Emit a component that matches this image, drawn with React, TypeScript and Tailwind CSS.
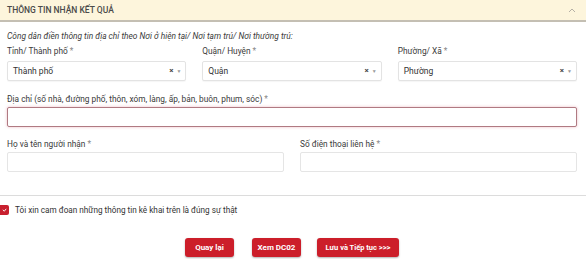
import React from "react";

const font = { fontFamily: 'Roboto, "Noto Sans", sans-serif' };

function Select({ value }: { value: string }) {
  return (
    <div className="h-[20px] border border-[#e3e3e3] rounded-[2px] bg-white flex items-center pl-[5px] pr-[4px] shadow-[0_1px_1px_rgba(0,0,0,0.04)]">
      <span className="flex-1 text-[8.5px] text-[#333]">{value}</span>
      <span className="text-[8px] font-bold text-[#444] leading-none">×</span>
      <span className="ml-[3px] text-[5px] text-[#999] leading-none">▼</span>
    </div>
  );
}

function Label({ children, mb = "mb-[4px]" }: { children: React.ReactNode; mb?: string }) {
  return (
    <div className={`text-[8.3px] leading-[12px] text-[#3a3a3a] ${mb}`}>
      {children} <span className="text-[#888]">*</span>
    </div>
  );
}

export default function App() {
  return (
    <div className="w-[586px] h-[259px] bg-white overflow-hidden" style={font}>
      <div className="h-[22px] bg-[#fdf5dc] border-b-2 border-[#c4bfb3] flex items-center justify-between pl-[7px] pr-[10px]">
        <span className="text-[8.5px] font-medium text-[#4a4a4a]">THÔNG TIN NHẬN KẾT QUẢ</span>
        <svg width="8" height="5" viewBox="0 0 8 5" className="mt-[1px]">
          <path d="M1 4 L4 1 L7 4" fill="none" stroke="#b5b0a5" strokeWidth="1" />
        </svg>
      </div>
      <div className="pl-[7px] pr-[9px]">
        <div className="mt-[8px] text-[8.4px] leading-[12px] italic text-[#3a3a3a]">
          Công dân điền thông tin địa chỉ theo Nơi ở hiện tại/ Nơi tạm trú/ Nơi thường trú:
        </div>
        <div className="mt-[3px] grid grid-cols-3 gap-x-[16px]">
          <div>
            <Label>Tỉnh/ Thành phố</Label>
            <Select value="Thành phố" />
          </div>
          <div>
            <Label>Quận/ Huyện</Label>
            <Select value="Quận" />
          </div>
          <div>
            <Label>Phường/ Xã</Label>
            <Select value="Phường" />
          </div>
        </div>
        <div className="mt-[12px]">
          <Label mb="mb-[2px]">Địa chỉ (số nhà, đường phố, thôn, xóm, làng, ấp, bản, buôn, phum, sóc)</Label>
          <div className="h-[20px] border border-[#b07a82] rounded-[2px] bg-white shadow-[0_0_3px_rgba(220,120,140,0.5)]" />
        </div>
        <div className="mt-[11px] grid grid-cols-2 gap-x-[16px]">
          <div>
            <Label mb="mb-[2px]">Họ và tên người nhận</Label>
            <div className="h-[20px] border border-[#e5e5e5] rounded-[2px] bg-white" />
          </div>
          <div>
            <Label mb="mb-[2px]">Số điện thoại liên hệ</Label>
            <div className="h-[20px] border border-[#e5e5e5] rounded-[2px] bg-white" />
          </div>
        </div>
      </div>
      <div className="mt-[23px] border-t border-[#dcdcdc]" />
      <div className="mt-[8px] flex items-center gap-[6px]">
        <div className="w-[9px] h-[10px] bg-[#c8202f] rounded-r-[2px] flex items-center justify-center">
          <svg width="5" height="4" viewBox="0 0 5 4">
            <path d="M0.8 1.8 L2.3 3.2 L4.2 0.8" fill="none" stroke="white" strokeWidth="0.9" />
          </svg>
        </div>
        <span className="text-[8.2px] leading-[12px] text-[#333]">Tôi xin cam đoan những thông tin kê khai trên là đúng sự thật</span>
      </div>
      <div className="mt-[22px] flex">
        <button className="ml-[185px] w-[49px] h-[19px] bg-[#cc1e2a] rounded-[3px] text-white text-[8px] font-bold shadow-[0_1px_2px_rgba(0,0,0,0.3)]">Quay lại</button>
        <button className="ml-[18px] w-[49px] h-[19px] bg-[#cc1e2a] rounded-[3px] text-white text-[8px] font-bold shadow-[0_1px_2px_rgba(0,0,0,0.3)]">Xem DC02</button>
        <button className="ml-[16px] w-[82px] h-[19px] bg-[#cc1e2a] rounded-[3px] text-white text-[7.5px] font-bold shadow-[0_1px_2px_rgba(0,0,0,0.3)]">Lưu và Tiếp tục &gt;&gt;&gt;</button>
      </div>
    </div>
  );
}
